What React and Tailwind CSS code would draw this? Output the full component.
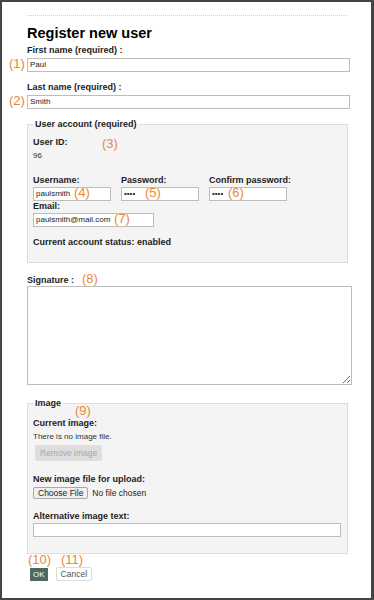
import React from 'react';

const font = { fontFamily: '"Liberation Sans", Arial, sans-serif' };

function Note({ children, className = '' }) {
  return (
    <span className={`absolute text-[13px] leading-[14px] text-[#e8893a] ${className}`}>{children}</span>
  );
}

function Label({ children, className = '' }) {
  return <div className={`whitespace-nowrap text-[9px] leading-[11px] font-bold text-[#222] ${className}`}>{children}</div>;
}

function Field({ value = '', className = '' }) {
  return (
    <div className={`h-[14px] border border-[#bdbdbd] bg-white pl-[2px] text-[8px] leading-[12px] text-[#222] ${className}`}>
      {value}
    </div>
  );
}

export default function App() {
  return (
    <div
      className="relative h-[600px] w-[374px] overflow-hidden border-t-2 border-l-2 border-r-[3px] border-b-2 border-[#454545] bg-white"
      style={font}
    >
      <div className="pl-[25px] pr-[21px] pt-[13px]">
        <div className="mr-[2px] border-t border-dotted border-[#d0d0d0]" />
        <h1 className="mt-[8px] text-[14.5px] leading-[18px] font-bold text-black">Register new user</h1>

        {/* names */}
        <Label className="mt-[3px]">First name (required) :</Label>
        <div className="relative mt-[2px]">
          <Note className="-left-[18px] -top-[1px]">(1)</Note>
          <Field value="Paul" />
        </div>
        <Label className="mt-[10px]">Last name (required) :</Label>
        <div className="relative mt-[2px]">
          <Note className="-left-[18px] -top-[1px]">(2)</Note>
          <Field value="Smith" />
        </div>

        {/* account */}
        <fieldset className="relative mt-[10px] mr-[2px] h-[144px] border border-[#dcdcdc] bg-[#f4f4f4] px-[5px]">
          <legend className="px-[2px] text-[9px] leading-[11px] font-bold text-[#222]">User account (required)</legend>
          <Note className="left-[74px] top-[7px]">(3)</Note>
          <Label className="mt-[7px]">User ID:</Label>
          <div className="mt-[3px] text-[8px] leading-[10px] text-[#333]">96</div>
          <div className="mt-[14px] flex gap-[10px]">
            <div className="w-[78px]">
              <Label>Username:</Label>
              <div className="relative mt-[1px]">
                <Note className="left-[41px] -top-[1px]">(4)</Note>
                <Field value="paulsmith" />
              </div>
            </div>
            <div className="w-[78px]">
              <Label>Password:</Label>
              <div className="relative mt-[1px]">
                <Note className="left-[24px] -top-[1px]">(5)</Note>
                <Field value="••••" />
              </div>
            </div>
            <div className="w-[78px]">
              <Label>Confirm password:</Label>
              <div className="relative mt-[1px]">
                <Note className="left-[19px] -top-[1px]">(6)</Note>
                <Field value="••••" />
              </div>
            </div>
          </div>
          <Label>Email:</Label>
          <div className="relative mt-[1px] w-[121px]">
            <Note className="left-[81px] -top-[1px]">(7)</Note>
            <Field value="paulsmith@mail.com" />
          </div>
          <Label className="mt-[10px]">Current account status: enabled</Label>
        </fieldset>

        {/* signature */}
        <div className="relative mt-[12px]">
          <Label>Signature :</Label>
          <Note className="left-[55px] -top-[3px]">(8)</Note>
        </div>
        <textarea className="block h-[99px] w-[325px] border border-[#bdbdbd] bg-white" />

        {/* image */}
        <fieldset className="relative mt-[13px] mr-[2px] h-[156px] border border-[#dcdcdc] bg-[#f4f4f4] px-[5px]">
          <legend className="px-[2px] text-[9px] leading-[11px] font-bold text-[#222]">Image</legend>
          <Note className="left-[47px] -top-[5px]">(9)</Note>
          <Label className="mt-[9px]">Current image:</Label>
          <div className="mt-[3px] text-[8px] leading-[10px] text-[#333]">There is no image file.</div>
          <div className="mt-[3px] ml-[2px] w-fit rounded-[2px] bg-[#dedede] px-[5px] py-[3px] text-[8.5px] leading-[10px] text-[#a8a8a8]">
            Remove image
          </div>
          <Label className="mt-[13px]">New image file for upload:</Label>
          <div className="mt-[2px] flex items-center gap-[4px] text-[8.5px] leading-[10px] text-[#222]">
            <span className="rounded-[2px] border border-[#a9a9a9] bg-[#efefef] px-[4px]">Choose File</span>
            <span>No file chosen</span>
          </div>
          <Label className="mt-[12px]">Alternative image text:</Label>
          <Field className="mt-[1px] mr-[1px]" />
        </fieldset>

        {/* buttons */}
        <div className="relative mt-[13px] ml-[3px] flex items-center gap-[8px]">
          <Note className="-left-[2px] -top-[14px]">(10)</Note>
          <Note className="left-[31px] -top-[14px]">(11)</Note>
          <span className="bg-[#4c6b60] px-[3px] text-[8px] leading-[13px] text-white">OK</span>
          <span className="rounded-[2px] border border-[#dcdcdc] bg-white px-[4px] text-[8.5px] leading-[12px] text-[#555]">Cancel</span>
        </div>
      </div>
    </div>
  );
}
